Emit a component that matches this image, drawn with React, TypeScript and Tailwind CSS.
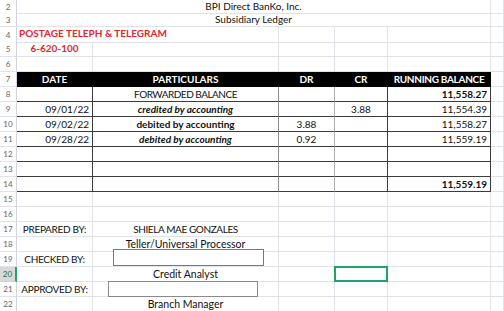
import React from "react";

const cols = "grid grid-cols-[17px_76px_186px_56px_53px_103px_1fr]";
const LR = "border-r-[#e2e2ea]";
const LB = "border-b-[#e2e2ea]";
const DR = "border-r-[#3c3c3c]";
const DB = "border-b-[#3c3c3c]";

function Cell({
  r = LR,
  b = LB,
  className = "",
  children,
}: {
  r?: string;
  b?: string;
  className?: string;
  children?: React.ReactNode;
}) {
  return (
    <div className={`relative flex items-end whitespace-nowrap border-r border-b leading-[13px] ${r} ${b} ${className}`}>
      {children}
    </div>
  );
}

function Hd({ n, active = false }: { n: number; active?: boolean }) {
  if (active)
    return (
      <div className="flex items-center justify-center border-r-2 border-b border-r-[#21a366] border-b-[#d0d0d0] bg-[#d9d9d9] text-[8px] text-[#1e7145]">
        {n}
      </div>
    );
  return (
    <div className="flex items-center justify-center border-r border-b border-r-[#d4d4dc] border-b-[#e2e2ea] bg-white text-[8px] text-[#666]">
      {n}
    </div>
  );
}

function Row({ h = "h-[15px]", children }: { h?: string; children: React.ReactNode }) {
  return <div className={`${cols} ${h}`}>{children}</div>;
}

// table body row: date, particulars, dr, cr, balance
function TRow({
  n,
  date,
  part,
  partCls = "",
  dr,
  cr,
  bal,
  balCls = "",
}: {
  n: number;
  date?: string;
  part?: string;
  partCls?: string;
  dr?: string;
  cr?: string;
  bal?: string;
  balCls?: string;
}) {
  return (
    <Row>
      <Hd n={n} />
      <Cell r={DR} b={DB} className="justify-end pr-[3px]">{date}</Cell>
      <Cell r="border-r-[#8c8c8c]" b={DB} className="justify-center">
        <span className={partCls}>{part}</span>
      </Cell>
      <Cell r="border-r-[#b0b0b0]" b={DB} className="justify-center">{dr}</Cell>
      <Cell r={DR} b={DB} className="justify-center">{cr}</Cell>
      <Cell r={DR} b={DB} className="justify-end pr-[3px]">
        <span className={balCls}>{bal}</span>
      </Cell>
      <Cell />
    </Row>
  );
}

const head = "justify-center bg-black font-bold text-white";

export default function App() {
  return (
    <div className="relative h-[311px] w-[504px] overflow-hidden bg-white text-[10px] text-[#111] font-['Lato',sans-serif]">
      <Row h="h-[13px]">
        <Hd n={2} />
        <Cell className="col-span-5 justify-center">BPI Direct BanKo, Inc.</Cell>
        <Cell />
      </Row>
      <Row h="h-[14px]">
        <Hd n={3} />
        <Cell className="col-span-5 justify-center">Subsidiary Ledger</Cell>
        <Cell />
      </Row>
      <Row>
        <Hd n={4} />
        <Cell className="col-span-2 pb-[2px] pl-[2px] font-bold text-[#e3262f]">POSTAGE TELEPH &amp; TELEGRAM</Cell>
        <Cell />
        <Cell />
        <Cell />
        <Cell />
      </Row>
      <Row>
        <Hd n={5} />
        <Cell className="justify-center pb-[1px] font-bold text-[#e3262f]">6-620-100</Cell>
        <Cell />
        <Cell />
        <Cell />
        <Cell />
        <Cell />
      </Row>
      <Row>
        <Hd n={6} />
        <Cell />
        <Cell />
        <Cell />
        <Cell />
        <Cell />
        <Cell />
      </Row>
      <Row>
        <Hd n={7} />
        <Cell r="border-r-black" b="border-b-black" className={head}>DATE</Cell>
        <Cell r="border-r-black" b="border-b-black" className={head}>PARTICULARS</Cell>
        <Cell r="border-r-black" b="border-b-black" className={head}>DR</Cell>
        <Cell r="border-r-black" b="border-b-black" className={head}>CR</Cell>
        <Cell r="border-r-black" b="border-b-black" className={`${head} tracking-[-0.3px]`}>RUNNING BALANCE</Cell>
        <Cell />
      </Row>
      <TRow n={8} part="FORWARDED BALANCE" partCls="tracking-[-0.5px]" bal="11,558.27" balCls="font-bold" />
      <TRow n={9} date="09/01/22" part="credited by accounting" partCls="font-bold italic" cr="3.88" bal="11,554.39" />
      <TRow n={10} date="09/02/22" part="debited by accounting" partCls="font-bold" dr="3.88" bal="11,558.27" />
      <TRow n={11} date="09/28/22" part="debited by accounting" partCls="font-bold italic" dr="0.92" bal="11,559.19" />
      <TRow n={12} />
      <TRow n={13} />
      <TRow n={14} bal="11,559.19" balCls="font-bold" />
      {[15, 16].map((n) => (
        <Row key={n}>
          <Hd n={n} />
          <Cell />
          <Cell />
          <Cell />
          <Cell />
          <Cell />
          <Cell />
        </Row>
      ))}
      <Row>
        <Hd n={17} />
        <Cell className="justify-center tracking-[-0.3px]">PREPARED BY:</Cell>
        <Cell className="justify-center tracking-[-0.4px]">SHIELA MAE GONZALES</Cell>
        <Cell />
        <Cell />
        <Cell />
        <Cell />
      </Row>
      <Row>
        <Hd n={18} />
        <Cell />
        <Cell className="justify-center text-[10.5px]">Teller/Universal Processor</Cell>
        <Cell />
        <Cell />
        <Cell />
        <Cell />
      </Row>
      <Row>
        <Hd n={19} />
        <Cell className="justify-center tracking-[-0.3px]">CHECKED BY:</Cell>
        <Cell />
        <Cell />
        <Cell />
        <Cell />
        <Cell />
      </Row>
      <Row>
        <Hd n={20} active />
        <Cell />
        <Cell className="justify-center text-[10.5px]">Credit Analyst</Cell>
        <Cell />
        <Cell>
          <div className="absolute -top-px -left-px -right-px -bottom-px border-2 border-[#21a366]" />
        </Cell>
        <Cell />
        <Cell />
      </Row>
      <Row>
        <Hd n={21} />
        <Cell className="justify-center tracking-[-0.3px]">APPROVED BY:</Cell>
        <Cell />
        <Cell />
        <Cell />
        <Cell />
        <Cell />
      </Row>
      <Row>
        <Hd n={22} />
        <Cell />
        <Cell className="justify-center text-[10.5px]">Branch Manager</Cell>
        <Cell />
        <Cell />
        <Cell />
        <Cell />
      </Row>

      {/* signature boxes (drawn shapes over the sheet) */}
      <div className="absolute left-[113px] top-[249px] h-[17px] w-[151px] border border-[#7a7a7a] bg-white" />
      <div className="absolute left-[108px] top-[281px] h-[16px] w-[150px] border border-[#8a8a8a] bg-white" />
    </div>
  );
}
